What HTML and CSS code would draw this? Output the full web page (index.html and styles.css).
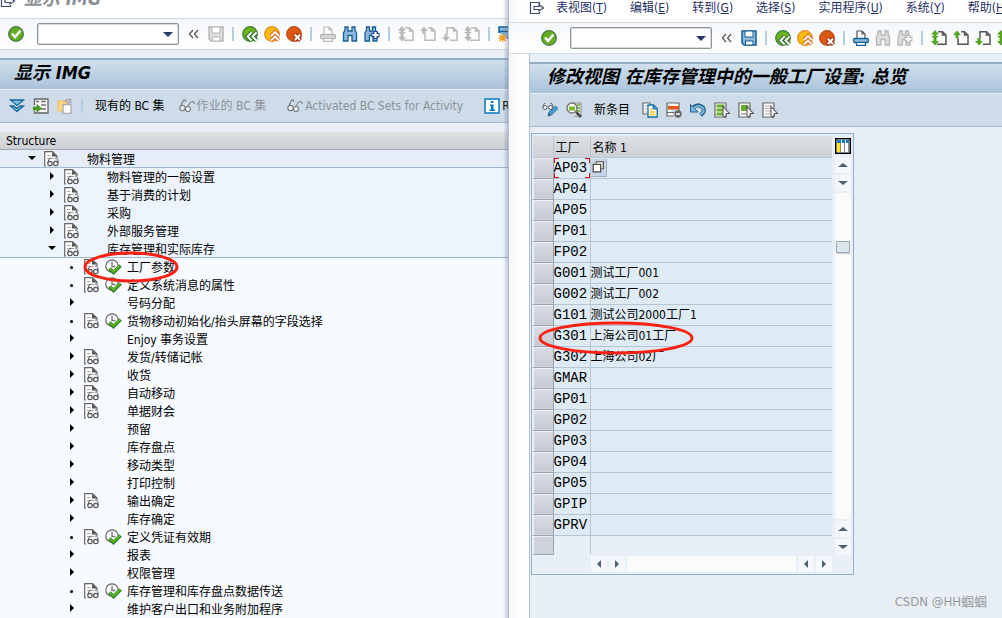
FILE: index.html
```html
<!DOCTYPE html>
<html lang="zh-CN">
<head>
<meta charset="utf-8">
<title>显示 IMG</title>
<link rel="stylesheet" href="styles.css">
</head>
<body>
<svg class="sprite" aria-hidden="true">
  <symbol id="exit" viewBox="0 0 16 14"><path d="M10.500 3V1.500H1.500V12.500H10.500V11M5 5.500H10V3.500L14.500 7L10 10V8.500H5Z" fill="#fff" stroke="currentColor" stroke-width="1.200"/></symbol>
  <symbol id="ok" viewBox="0 0 16 16"><circle cx="8" cy="8" r="7.300" fill="#62ad23" stroke="#48783a" stroke-width="1.300"/><path d="M4 7.500L7 11L12.500 4.500" fill="none" stroke="#fff" stroke-width="2.500"/></symbol>
  <symbol id="collapse" viewBox="0 0 11 10"><path d="M5 1L1.500 5L5 9M10 1L6.500 5L10 9" fill="none" stroke="#555" stroke-width="1.300"/></symbol>
  <symbol id="save" viewBox="0 0 16 16"><path d="M1 1H15V15H3L1 13Z" fill="var(--fill)" stroke="currentColor" stroke-width="1.500"/><path d="M4 1H12V7H4Z" fill="#fff" stroke="currentColor"/><path d="M4.500 15V11H12V15Z" fill="#fff" stroke="currentColor"/></symbol>
  <symbol id="back" viewBox="0 0 16 16"><circle cx="8" cy="8" r="7.300" fill="#6cb31d" stroke="#3d7c35" stroke-width="1.200"/><path d="M9.500 6.500L5.500 10.500L9.500 14.500M14.500 6.500L10.500 10.500L14.500 14.500" fill="none" stroke="#397534" stroke-width="4"/><path d="M9.500 6.500L5.500 10.500L9.500 14.500M14.500 6.500L10.500 10.500L14.500 14.500" fill="none" stroke="#fff" stroke-width="1.800"/></symbol>
  <symbol id="up" viewBox="0 0 16 16"><circle cx="8" cy="8" r="7.300" fill="#fdbc10" stroke="#e98718" stroke-width="1.200"/><path d="M7 10L11 6L15 10M7 14.500L11 10.500L15 14.500" fill="none" stroke="#df671b" stroke-width="4"/><path d="M7 10L11 6L15 10M7 14.500L11 10.500L15 14.500" fill="none" stroke="#fff" stroke-width="1.800"/></symbol>
  <symbol id="cancel" viewBox="0 0 16 16"><circle cx="8" cy="8" r="7.300" fill="#dc5712" stroke="#b44a1d" stroke-width="1.200"/><path d="M8.500 8.500L14.500 14.500M14.500 8.500L8.500 14.500" stroke="#a53218" stroke-width="4.500"/><path d="M8.800 8.800L14 14M14 8.800L8.800 14" stroke="#fff" stroke-width="2"/></symbol>
  <symbol id="print" viewBox="0 0 16 16"><path d="M4 8V1H9L12 4V8M9 1V4H12" fill="#fff" stroke="var(--paper)" stroke-width="1.200"/><rect x=".7" y="8.500" width="14.600" height="4" rx="1" fill="var(--fill)" stroke="currentColor" stroke-width="1.300"/><path d="M3.500 13V15.300H12.500V13" fill="#fff" stroke="currentColor" stroke-width="1.200"/></symbol>
  <symbol id="find" viewBox="0 0 16 16"><path d="M3 1H6V5H10V1H13V4L14.500 7V15H10V9.500H6V15H1.500V7L3 4Z" fill="var(--fill)" stroke="currentColor" stroke-width="1.300"/></symbol>
  <symbol id="findnext" viewBox="0 0 16 16"><path d="M2.500 1H5.500V5H8.500V1H11.500V4L13 7V15H9V9.500H5.500V15H1V7L2.500 4Z" fill="var(--fill)" stroke="currentColor" stroke-width="1.300"/><path d="M11.500 5V13M7.500 9H15.500" stroke="var(--plus)" stroke-width="4.500"/><path d="M11.500 6V12M8.500 9H14.500" stroke="#fff" stroke-width="2"/></symbol>
  <symbol id="page" viewBox="0 0 16 16"><path d="M7 1.700H11.500L15 5V14.300H6M11.500 2V5H15" fill="none" stroke="var(--paper)" stroke-width="1.500"/></symbol>
  <symbol id="first" viewBox="0 0 16 16"><use href="#page"/><path d="M4 0L8 4.500H5.500V6H8L4 9L0 6H2.500V4.500H0ZM2.500 8H5.500V11H8L4 15.500L0 11H2.500Z" fill="var(--arrow)"/></symbol>
  <symbol id="prev" viewBox="0 0 16 16"><path d="M5 8V14.300H15V5L11.500 1.700H8M11.500 2V5H15" fill="none" stroke="var(--paper)" stroke-width="1.500"/><path d="M4 .5L8 5H5.500V8H2.500V5H0Z" fill="var(--arrow)"/></symbol>
  <symbol id="next" viewBox="0 0 16 16"><path d="M5 8V1.700H11.500L15 5V14.300H8M11.500 2V5H15" fill="none" stroke="var(--paper)" stroke-width="1.500"/><path d="M4 15.500L0 11H2.500V8H5.500V11H8Z" fill="var(--arrow)"/></symbol>
  <symbol id="session" viewBox="0 0 16 16"><path d="M1 7V1H15V12H9M1 5.500H15" fill="#8db8d8" stroke="#146296" stroke-width="1.500"/><path d="M4.500 8V16M.5 12H8.500M1.500 9L7.500 15M7.500 9L1.500 15" stroke="#efa11a" stroke-width="1.400"/></symbol>
  <symbol id="expand" viewBox="0 0 16 16"><path d="M1.500 2H14.500L8 7.500Z" fill="#8cc2df" stroke="#11659b" stroke-width="1.300"/><path d="M1.500 8H4.500L8 10.500L11.500 8H14.500L8 13.500Z" fill="#8cc2df" stroke="#11659b" stroke-width="1.300"/></symbol>
  <symbol id="position" viewBox="0 0 16 16"><path d="M1.500 7V1H15V15H1.500V13" fill="#f7f7f7" stroke="#666" stroke-width="1.300"/><path d="M3 3.500H6M8 3.500H13M8 7H13M8 11H13" stroke="#777" stroke-width="1.500"/><path d="M0 9H4V6.500L8.500 10.500L4 14V12H0Z" fill="#48a31a" stroke="#317b21" stroke-width=".6"/></symbol>
  <symbol id="paste" viewBox="0 0 16 16"><path d="M1 3H10V13H1Z" fill="#ffd77d" stroke="#efbb63"/><path d="M6 6.500H14V15.300H6Z" fill="#fff" stroke="#aaa" stroke-width="1.300"/><path d="M8 4Q10-.5 13 3M13.500.5V4.500H9.500" fill="none" stroke="#aaa" stroke-width="1.500"/></symbol>
  <symbol id="glasses" viewBox="0 0 16 16"><path d="M6.500 2Q5 1 3.500 4L1.500 9M15.500 6Q14 1.500 11 5L8 9M6.500 2V4" fill="none" stroke="#777d82" stroke-width="1.100"/><circle cx="3.500" cy="10" r="2.700" fill="#f0f2f3" stroke="#777d82" stroke-width="1.200"/><circle cx="9" cy="11" r="2.500" fill="#f0f2f3" stroke="#777d82" stroke-width="1.200"/></symbol>
  <symbol id="info" viewBox="0 0 16 16"><path d="M1 1H15V15H1Z" fill="#fff" stroke="#087abc" stroke-width="1.500"/><path d="M7 3H9.500V5H7ZM6 6.500H9.500V11.500H11V13H5.500V11.500H7V8H6Z" fill="#087abc"/></symbol>
  <symbol id="imgdoc" viewBox="0 0 15 16"><path d="M2 15H.7V.7H8.500L13 5V7" fill="#fff" stroke="#666" stroke-width="1.200"/><path d="M8 1V5.500H13Z" fill="#555"/><path d="M3 4.500H6.500M3 7.500H10" stroke="#aaa"/><path d="M7 7Q4 8 3.800 12M11 7Q14.500 7 14 12" fill="none" stroke="#555"/><circle cx="6" cy="12.500" r="2.200" fill="#fff" stroke="#555" stroke-width="1.200"/><circle cx="11.800" cy="12.500" r="2.200" fill="#fff" stroke="#555" stroke-width="1.200"/></symbol>
  <symbol id="execute" viewBox="0 0 17 16"><circle cx="7" cy="7" r="6.200" fill="#fff" stroke="#666" stroke-width="1.200"/><path d="M7 2.500V7.500H10.500" fill="none" stroke="#777" stroke-width="1.300"/><path d="M4.500 9.500L8.500 13.500L15.500 6.500" fill="none" stroke="#2b7e27" stroke-width="3.600"/><path d="M5 9.500L8.500 12.800L15 6.500" fill="none" stroke="#67bd20" stroke-width="1.700"/></symbol>
  <symbol id="toggle" viewBox="0 0 16 16"><path d="M3 1Q1 2 1 5M8 1Q11 1 11 5" fill="none" stroke="#666"/><circle cx="3" cy="5.500" r="2" fill="#fff" stroke="#555"/><circle cx="8.500" cy="5.500" r="2" fill="#fff" stroke="#555"/><path d="M6 14L7 10L13.500 4L16 6.500L9.500 13Z" fill="#4a9bca" stroke="#1b6796" stroke-width=".8"/><path d="M6 14L7 11L9 13Z" fill="#555"/></symbol>
  <symbol id="details" viewBox="0 0 16 16"><path d="M5 1H15V14H8" fill="#eee" stroke="#888"/><path d="M11 3H14M11 6H14M11 9H14" stroke="#62ad23" stroke-width="1.500"/><circle cx="6" cy="6" r="5" fill="#fff" stroke="#777" stroke-width="1.500"/><path d="M3 4.500H9V8.500H3Z" fill="#72b72b"/><path d="M10 10L15 15" stroke="#4c4c4c" stroke-width="2.800"/></symbol>
  <symbol id="copy" viewBox="0 0 16 16"><path d="M1 1H8V12H1Z" fill="#fff" stroke="#666" stroke-width="1.200"/><path d="M2.500 4H6M2.500 7H6M2.500 10H5" stroke="#aaa"/><path d="M6 3H11.500L15.200 6.500V15H6Z" fill="#fff" stroke="#156b9d" stroke-width="1.300"/><path d="M11 3V7H15" fill="#4d9bc8" stroke="#156b9d"/><path d="M8 7.500H10M8 10H13.500M8 12.500H13.500" stroke="#f4c519" stroke-width="1.700"/></symbol>
  <symbol id="delrow" viewBox="0 0 16 16"><path d="M1 1H13V9M1 1V14H8" fill="#fff" stroke="#666" stroke-width="1.200"/><path d="M1 10.500H8" stroke="#666"/><path d="M2 4H13V7.500H2Z" fill="#df5812"/><circle cx="12" cy="12" r="3.700" fill="#666"/><path d="M10 12H14" stroke="#fff" stroke-width="1.500"/></symbol>
  <symbol id="undo" viewBox="0 0 16 16"><path d="M3 6Q8 1 13 5.500Q15.500 9.500 10.500 13" fill="none" stroke="#245e8d" stroke-width="4"/><path d="M.5 2.500V10H8Z" fill="#76b5da" stroke="#245e8d"/><path d="M3 7Q8 1.500 13 6Q15 9.500 10.500 12.500" fill="none" stroke="#76b5da" stroke-width="2"/></symbol>
  <symbol id="cursor" viewBox="0 0 16 16"><path d="M9 4.500L15.500 11.500H12.500L11 15.500L9 14Z" fill="#fff" stroke="#555" stroke-width="1.100"/></symbol>
  <symbol id="selall" viewBox="0 0 16 16"><path d="M1 1H12V15H1Z" fill="#fff" stroke="#666" stroke-width="1.200"/><path d="M2.500 4H10.500M2.500 8H10M2.500 12H9" stroke="#65ae27" stroke-width="3"/><use href="#cursor"/></symbol>
  <symbol id="selblock" viewBox="0 0 16 16"><path d="M1 1H12V15H1Z" fill="#fff" stroke="#666" stroke-width="1.200"/><path d="M3 3H10.500V9H3Z" fill="#65ae27"/><path d="M3 12H8" stroke="#999" stroke-width="1.500"/><use href="#cursor"/></symbol>
  <symbol id="desel" viewBox="0 0 16 16"><path d="M1 1H12V15H1Z" fill="#fff" stroke="#666" stroke-width="1.200"/><path d="M3 4H10M3 6.500H9M3 9H9M3 12H8" stroke="#aaa" stroke-width="1.200"/><use href="#cursor"/></symbol>
  <symbol id="config" viewBox="0 0 16 16"><path d="M.75 .75H15.250V15.250H.75Z" fill="#fff" stroke="#000" stroke-width="1.500"/><path d="M2 5H5V14H2Z" fill="#ffe800"/><path d="M2 2H14V5H2Z" fill="#1879c9"/><path d="M5.500 5V14M9.500 5V14M13.500 5V14" stroke="#888"/><path d="M6.500 2V5M10.500 2V5" stroke="#fff"/></symbol>
  <symbol id="f4" viewBox="0 0 16 16"><path d="M6 4V2H14V10H12" fill="#fff" stroke="#4f4a43" stroke-width="1.400"/><path d="M2.500 5H11V13.500H2.500Z" fill="#fff" stroke="#4f4a43" stroke-width="1.400"/></symbol>
</svg>

<main class="desktop">
  <section class="window window-left" aria-label="显示 IMG">
    <div class="clipped-title"><svg class="exit"><use href="#exit"/></svg><span>显示 IMG</span></div>
    <div class="toolbar">
      <button aria-label="确定"><svg><use href="#ok"/></svg></button>
      <div class="command"><input type="text" aria-label="命令"><button class="drop" aria-label="历史"></button></div>
      <button class="collapse" aria-label="收起"><svg><use href="#collapse"/></svg></button>
      <button class="off" aria-label="保存"><svg><use href="#save"/></svg></button><i class="sep"></i>
      <button aria-label="返回"><svg><use href="#back"/></svg></button>
      <button aria-label="退出"><svg><use href="#up"/></svg></button>
      <button aria-label="取消"><svg><use href="#cancel"/></svg></button><i class="sep"></i>
      <button class="off" aria-label="打印"><svg><use href="#print"/></svg></button>
      <button aria-label="查找"><svg><use href="#find"/></svg></button>
      <button aria-label="继续查找"><svg><use href="#findnext"/></svg></button><i class="sep"></i>
      <button class="off" aria-label="首页"><svg><use href="#first"/></svg></button>
      <button class="off" aria-label="上一页"><svg><use href="#prev"/></svg></button>
      <button class="off" aria-label="下一页"><svg><use href="#next"/></svg></button>
      <button class="off" aria-label="末页"><svg><use href="#first"/></svg></button><i class="sep"></i>
      <button aria-label="新会话"><svg><use href="#session"/></svg></button>
    </div>
    <h1 class="title">显示 IMG</h1>
    <div class="actions">
      <button aria-label="展开"><svg><use href="#expand"/></svg></button>
      <button aria-label="定位"><svg><use href="#position"/></svg></button>
      <button aria-label="粘贴"><svg><use href="#paste"/></svg></button><i class="sep"></i>
      <button class="labelled">现有的 BC 集</button>
      <button class="labelled muted"><svg><use href="#glasses"/></svg>作业的 BC 集</button>
      <button class="labelled muted"><svg><use href="#glasses"/></svg>Activated BC Sets for Activity</button>
      <button class="labelled"><svg><use href="#info"/></svg>Release Notes</button>
    </div>
    <div class="structure">Structure</div>
    <ul class="tree">
      <li class="l0 open"><button aria-label="折叠"></button><svg><use href="#imgdoc"/></svg><span>物料管理</span></li>
      <li class="l1"><button aria-label="展开"></button><svg><use href="#imgdoc"/></svg><span>物料管理的一般设置</span></li>
      <li class="l1"><button aria-label="展开"></button><svg><use href="#imgdoc"/></svg><span>基于消费的计划</span></li>
      <li class="l1"><button aria-label="展开"></button><svg><use href="#imgdoc"/></svg><span>采购</span></li>
      <li class="l1"><button aria-label="展开"></button><svg><use href="#imgdoc"/></svg><span>外部服务管理</span></li>
      <li class="l1 open"><button aria-label="折叠"></button><svg><use href="#imgdoc"/></svg><span>库存管理和实际库存</span></li>
      <li class="l2 leaf"><i></i><svg><use href="#imgdoc"/></svg><svg class="run"><use href="#execute"/></svg><span>工厂参数</span><svg class="mark mark-tree" viewBox="0 0 96 32" preserveAspectRatio="none"><ellipse cx="48" cy="16" rx="46" ry="14"/></svg></li>
      <li class="l2 leaf"><i></i><svg><use href="#imgdoc"/></svg><svg class="run"><use href="#execute"/></svg><span>定义系统消息的属性</span></li>
      <li class="l2"><button aria-label="展开"></button><span>号码分配</span></li>
      <li class="l2 leaf"><i></i><svg><use href="#imgdoc"/></svg><svg class="run"><use href="#execute"/></svg><span>货物移动初始化/抬头屏幕的字段选择</span></li>
      <li class="l2"><button aria-label="展开"></button><span>Enjoy 事务设置</span></li>
      <li class="l2"><button aria-label="展开"></button><svg><use href="#imgdoc"/></svg><span>发货/转储记帐</span></li>
      <li class="l2"><button aria-label="展开"></button><svg><use href="#imgdoc"/></svg><span>收货</span></li>
      <li class="l2"><button aria-label="展开"></button><svg><use href="#imgdoc"/></svg><span>自动移动</span></li>
      <li class="l2"><button aria-label="展开"></button><svg><use href="#imgdoc"/></svg><span>单据财会</span></li>
      <li class="l2"><button aria-label="展开"></button><span>预留</span></li>
      <li class="l2"><button aria-label="展开"></button><span>库存盘点</span></li>
      <li class="l2"><button aria-label="展开"></button><span>移动类型</span></li>
      <li class="l2"><button aria-label="展开"></button><span>打印控制</span></li>
      <li class="l2"><button aria-label="展开"></button><svg><use href="#imgdoc"/></svg><span>输出确定</span></li>
      <li class="l2"><button aria-label="展开"></button><span>库存确定</span></li>
      <li class="l2 leaf"><i></i><svg><use href="#imgdoc"/></svg><svg class="run"><use href="#execute"/></svg><span>定义凭证有效期</span></li>
      <li class="l2"><button aria-label="展开"></button><span>报表</span></li>
      <li class="l2"><button aria-label="展开"></button><span>权限管理</span></li>
      <li class="l2 leaf"><i></i><svg><use href="#imgdoc"/></svg><svg class="run"><use href="#execute"/></svg><span>库存管理和库存盘点数据传送</span></li>
      <li class="l2"><button aria-label="展开"></button><span>维护客户出口和业务附加程序</span></li>
    </ul>
  </section>

  <section class="window window-right" aria-label="修改视图">
    <nav class="menu">
      <svg class="exit"><use href="#exit"/></svg>
      <button>表视图(<u>T</u>)</button><button>编辑(<u>E</u>)</button><button>转到(<u>G</u>)</button><button>选择(<u>S</u>)</button><button>实用程序(<u>U</u>)</button><button>系统(<u>Y</u>)</button><button>帮助(<u>H</u>)</button>
    </nav>
    <div class="toolbar">
      <button aria-label="确定"><svg><use href="#ok"/></svg></button>
      <div class="command"><input type="text" aria-label="命令"><button class="drop" aria-label="历史"></button></div>
      <button class="collapse" aria-label="收起"><svg><use href="#collapse"/></svg></button>
      <button aria-label="保存"><svg><use href="#save"/></svg></button><i class="sep"></i>
      <button aria-label="返回"><svg><use href="#back"/></svg></button>
      <button aria-label="退出"><svg><use href="#up"/></svg></button>
      <button aria-label="取消"><svg><use href="#cancel"/></svg></button><i class="sep"></i>
      <button aria-label="打印"><svg><use href="#print"/></svg></button>
      <button class="off" aria-label="查找"><svg><use href="#find"/></svg></button>
      <button class="off" aria-label="继续查找"><svg><use href="#findnext"/></svg></button><i class="sep"></i>
      <button aria-label="首页"><svg><use href="#first"/></svg></button>
      <button aria-label="上一页"><svg><use href="#prev"/></svg></button>
      <button aria-label="下一页"><svg><use href="#next"/></svg></button>
      <button aria-label="末页"><svg><use href="#first"/></svg></button>
    </div>
    <div class="view">
      <h1 class="title">修改视图 在库存管理中的一般工厂设置: 总览</h1>
      <div class="actions">
        <button aria-label="显示/更改"><svg><use href="#toggle"/></svg></button>
        <button aria-label="明细"><svg><use href="#details"/></svg></button>
        <button class="labelled">新条目</button>
        <button aria-label="复制"><svg><use href="#copy"/></svg></button>
        <button aria-label="删除"><svg><use href="#delrow"/></svg></button>
        <button aria-label="撤消"><svg><use href="#undo"/></svg></button>
        <button aria-label="全选"><svg><use href="#selall"/></svg></button>
        <button aria-label="选择块"><svg><use href="#selblock"/></svg></button>
        <button aria-label="取消全选"><svg><use href="#desel"/></svg></button>
      </div>
      <div class="control">
        <table>
          <colgroup><col class="c-sel"><col class="c-code"><col></colgroup>
          <thead><tr><th></th><th>工厂</th><th>名称 1</th></tr></thead>
          <tbody>
            <tr><td></td><td class="focus"><input type="text" value="AP03" aria-label="工厂"></td><td><button class="f4" aria-label="搜索帮助"><svg><use href="#f4"/></svg></button></td></tr>
            <tr><td></td><td>AP04</td><td></td></tr>
            <tr><td></td><td>AP05</td><td></td></tr>
            <tr><td></td><td>FP01</td><td></td></tr>
            <tr><td></td><td>FP02</td><td></td></tr>
            <tr><td></td><td>G001</td><td>测试工厂001</td></tr>
            <tr><td></td><td>G002</td><td>测试工厂002</td></tr>
            <tr><td></td><td>G101</td><td>测试公司2000工厂1</td></tr>
            <tr class="marked"><td><svg class="mark mark-table" viewBox="0 0 158 36" preserveAspectRatio="none"><ellipse cx="79" cy="18" rx="76" ry="15"/></svg></td><td>G301</td><td>上海公司01工厂</td></tr>
            <tr><td></td><td>G302</td><td>上海公司02厂</td></tr>
            <tr><td></td><td>GMAR</td><td></td></tr>
            <tr><td></td><td>GP01</td><td></td></tr>
            <tr><td></td><td>GP02</td><td></td></tr>
            <tr><td></td><td>GP03</td><td></td></tr>
            <tr><td></td><td>GP04</td><td></td></tr>
            <tr><td></td><td>GP05</td><td></td></tr>
            <tr><td></td><td>GPIP</td><td></td></tr>
            <tr><td></td><td>GPRV</td><td></td></tr>
            <tr class="blank"><td></td><td></td><td></td></tr>
          </tbody>
        </table>
        <div class="vbar">
          <button class="config" aria-label="配置"><svg><use href="#config"/></svg></button>
          <button class="arrow up" aria-label="上"></button><button class="arrow down" aria-label="下"></button>
          <div class="track"><span class="thumb"></span></div>
          <button class="arrow up" aria-label="上页"></button><button class="arrow down" aria-label="下页"></button>
        </div>
        <div class="hbar">
          <button class="arrow left" aria-label="左"></button><button class="arrow right" aria-label="右"></button>
          <div class="track"></div>
          <button class="arrow left" aria-label="左页"></button><button class="arrow right" aria-label="右页"></button>
        </div>
      </div>
    </div>
    <div class="credit">CSDN @HH蝈蝈</div>
  </section>
</main>
</body>
</html>
```

FILE: styles.css
```css
* { box-sizing: border-box; }
body {
  margin: 0;
  overflow: hidden;
  font: 12px/18px "DejaVu Sans Condensed", "Noto Sans CJK SC", sans-serif;
  color: #000;
}
button, input { font: inherit; color: inherit; border: 0; padding: 0; margin: 0; background: none; }
button { display: inline-flex; align-items: center; flex: none; white-space: nowrap; }
svg { width: 16px; height: 16px; display: block; flex: none; overflow: visible; }
.sprite { position: absolute; width: 0; height: 0; }

.desktop { display: grid; grid-template-columns: 509fr 493fr; height: 100vh; }
.window {
  position: relative;
  min-width: 0;
  overflow: hidden;
  display: flex;
  flex-direction: column;
  --fill: #8db8dc;
  --paper: #555;
  --arrow: #54a51f;
  --plus: #25469a;
}
.window-left { background: #e8eff7; border-right: 1px solid #b5bfd2; }
.window-left::after {
  content: "";
  position: absolute;
  inset: 0 0 0 auto;
  width: 5px;
  background: linear-gradient(90deg, rgba(90, 105, 140, 0), rgba(90, 105, 140, .35));
}
.window-right { background: linear-gradient(90deg, #f5f7fb, #fff 14px); }

.clipped-title {
  height: 18px;
  flex: none;
  background: #fff;
  color: #8c8f94;
  font-size: 18px;
  font-weight: bold;
  font-style: italic;
  display: flex;
  gap: 8px;
}
.clipped-title > * { margin-top: -10px; }
.clipped-title .exit { margin-top: -6px; }
.exit { width: 16px; height: 14px; color: #3d4970; }

.menu {
  display: flex;
  align-items: center;
  gap: 23px;
  height: 22px;
  flex: none;
  padding: 0 0 6px 20px;
  color: #1f2f66;
}
.menu .exit { margin-right: -12px; }

.toolbar {
  display: flex;
  align-items: center;
  gap: 6px;
  height: 32px;
  flex: none;
  padding-left: 8px;
  background: linear-gradient(#f5f8fb, #fff);
  border: solid #d3dae2;
  border-width: 1px 0;
  color: #165f91;
}
.window-right .toolbar { padding-left: 32px; }
.sep { flex: none; width: 2px; height: 14px; margin: 0 2px; background: #b3cde3; }
.off { color: #b7b7b7; --fill: #dcdcdc; --paper: #b9b9b9; --arrow: #b9b9b9; --plus: #b7b7b7; }
.command {
  display: flex;
  flex: none;
  width: 142px;
  height: 22px;
  margin: 0 3px 0 7px;
  background: #fff;
  border: 1px solid #8f9499;
  border-radius: 2px;
  box-shadow: inset 0 0 0 1px #d9dcdf;
}
.command input { flex: 1; min-width: 0; padding: 0 4px; }
.drop { width: 20px; justify-content: center; }
.drop::before { content: ""; border: solid transparent; border-width: 5px 5px 0; border-top-color: #25396b; }
.collapse { margin-right: 3px; }
.collapse svg { width: 11px; height: 10px; }

.title {
  margin: 8px 0 0;
  height: 32px;
  flex: none;
  padding-left: 14px;
  font-size: 18px;
  line-height: 26px;
  font-style: italic;
  white-space: nowrap;
  background: linear-gradient(#d0e0ec, #a9c2da);
  border-top: 2px solid #93abc1;
  border-bottom: 1px solid #e5edf4;
}
.actions {
  display: flex;
  align-items: center;
  gap: 8px;
  height: 33px;
  flex: none;
  padding-left: 9px;
  background: #cddce8;
  border-bottom: 1px solid #a9bccb;
}
.labelled { gap: 2px; }
.window-left .labelled { margin-right: 13px; }
.window-left .sep { margin-left: 0; }
.window-left .toolbar .sep { margin-left: 2px; }
.window-left .sep + .labelled { margin: 0 6px 0 2px; }
.muted { color: #8c9298; }
.structure {
  flex: none;
  margin-top: 9px;
  height: 18px;
  padding-left: 6px;
  background: linear-gradient(#dfe2e4, #cbd0d4);
  border-bottom: 1px solid #a2aab3;
}

.tree { flex: 1; min-height: 0; margin: 0; padding: 0; list-style: none; background: #f7faff; }
.tree li {
  position: relative;
  display: grid;
  grid-template-columns: 20px 21px 22px 1fr;
  grid-template-rows: 18px;
  align-items: center;
  height: 18px;
  white-space: nowrap;
}
.tree li > span { grid-column: 4; padding-top: 2px; }
.tree svg { width: 15px; grid-row: 1; }
.tree li > span, .tree li > button, .tree li > i { grid-row: 1; }
.tree .run { width: 17px; }
.l0 { padding-left: 24px; background: #e4edf8; border-bottom: 1px solid #9fb7d2; }
.l1 { padding-left: 44px; background: #edf4fd; }
.l1.open { border-bottom: 1px solid #9fb7d2; }
.l2 { padding-left: 64px; }
.tree button::before {
  content: "";
  margin: -3px 0 0 6px;
  border: solid transparent;
  border-width: 4px 0 4px 4px;
  border-left-color: #000;
}
.tree .open button::before { margin-left: 4px; border-width: 4px 4px 0; border-color: #000 transparent transparent; }
.leaf i { width: 3px; height: 3px; margin-left: 6px; border-radius: 50%; background: #000; }

.mark { position: absolute; z-index: 2; fill: none; stroke: #fb2113; stroke-width: 3px; pointer-events: none; }
.tree .mark-tree { left: 83px; top: -7px; width: 96px; height: 32px; }
.mark-table { left: 4px; top: -5px; width: 158px; height: 36px; }

.view {
  flex: 1;
  min-height: 0;
  margin-left: 20px;
  background: #e8eff7;
  border-left: 1px solid #aebfd2;
}
.view .title { padding-left: 17px; }
.view .actions { padding-left: 12px; }
.view .labelled { margin: 0 4px; }

.control {
  display: grid;
  grid-template-columns: 1fr 16px;
  column-gap: 3px;
  width: 323px;
  max-width: 100%;
  margin: 6px 0 0 1px;
  padding: 2px 2px 2px 1px;
  border: 1px solid #8eadcc;
}
table { width: 100%; table-layout: fixed; border-collapse: collapse; }
.c-sel { width: 20px; }
.c-code { width: 37px; }
th, td { height: 21px; padding: 0; text-align: left; white-space: nowrap; border: solid #b7c5d4; border-width: 0 1px 1px 0; }
th:last-child, td:last-child { border-right: 0; }
th { padding: 3px 0 0 2px; line-height: 16px; font-weight: normal; background: linear-gradient(#dde0e2, #ced2d8); }
td { background: #deebf5; }
td:first-child { background: linear-gradient(#dadde4, #c6cad4); border-color: #98a3b2; box-shadow: inset 1px 1px #f0f1f4; }
td:nth-child(2) { font-family: "Liberation Mono", monospace; font-size: 14px; }
.marked { position: relative; }
.blank td { height: 19px; border-bottom: 0; background: #e8eff7; }
.blank td:first-child { background: #ced2da; border-bottom: 1px solid #98a3b2; }
td input { display: block; width: 36px; height: 18px; }
.focus {
  --c: #e01010;
  background:
    linear-gradient(var(--c), var(--c)) 0 0 / 5px 1px, linear-gradient(var(--c), var(--c)) 0 0 / 1px 5px,
    linear-gradient(var(--c), var(--c)) 100% 0 / 5px 1px, linear-gradient(var(--c), var(--c)) 100% 0 / 1px 5px,
    linear-gradient(var(--c), var(--c)) 0 100% / 5px 1px, linear-gradient(var(--c), var(--c)) 0 100% / 1px 5px,
    linear-gradient(var(--c), var(--c)) 100% 100% / 5px 1px, linear-gradient(var(--c), var(--c)) 100% 100% / 1px 5px,
    #deebf5;
  background-repeat: no-repeat;
}
.f4 { display: flex; width: 16px; height: 18px; background: #c5d4e8; border: solid #a5b0c0; border-width: 0 1px 1px 0; justify-content: center; }
.f4 svg { width: 14px; height: 14px; }

.vbar { display: flex; flex-direction: column; gap: 2px; }
.config { height: 19px; }
.arrow { width: 16px; height: 16px; justify-content: center; background: #f4f7fb; }
.arrow::before { content: ""; border: 4px solid transparent; }
.up::before { border-width: 0 5px 4px; border-bottom-color: #4d6270; }
.down::before { border-width: 4px 5px 0; border-top-color: #4d6270; }
.left::before { border-width: 4px 4px 4px 0; border-right-color: #4d6270; }
.right::before { border-width: 4px 0 4px 4px; border-left-color: #4d6270; }
.track { flex: 1; background: #fbfbfb; }
.vbar .track { padding: 48px 0 0 1px; }
.thumb { display: block; width: 14px; height: 12px; background: #dbe5ee; border: 1px solid #98a8b8; border-radius: 1px; box-shadow: 0 1px 1px #ccc; }
.hbar { display: flex; gap: 2px; margin: 1px 0 0 58px; }

.credit { position: absolute; right: 15px; bottom: 7px; font-size: 13px; color: #999; }
```
